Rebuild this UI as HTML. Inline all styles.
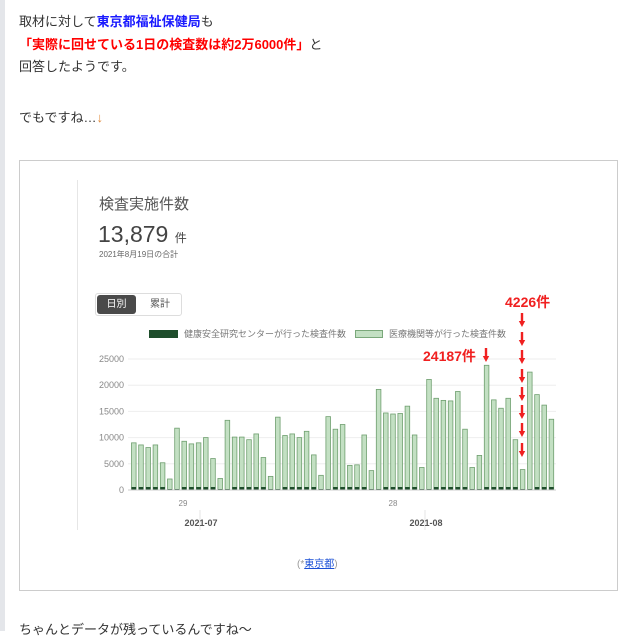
<!DOCTYPE html>
<html><head><meta charset="utf-8"><style>
body{margin:0;width:627px;height:631px;overflow:hidden;background:#fff;font-family:"Liberation Sans","Noto Sans CJK JP",sans-serif;position:relative;color:#333}
.strip{position:absolute;left:0;top:0;width:5px;height:631px;background:#e4e6ea}
.t{position:absolute;left:19px;font-size:13px;white-space:nowrap;line-height:16px}
.box{position:absolute;left:19px;top:160px;width:597px;height:429px;border:1px solid #ccc}
.a{position:absolute;white-space:nowrap}
</style></head><body>
<div class="strip"></div>
<div class="t" style="top:14px">取材に対して<b style="color:#1a1aff">東京都福祉保健局</b>も</div>
<div class="t" style="top:37px;color:#f00;font-weight:bold">「実際に回せている1日の検査数は約2万6000件」<span style="color:#333;font-weight:normal">と</span></div>
<div class="t" style="top:59px">回答したようです。</div>
<div class="t" style="top:110px">でもですね…<span style="color:#e08a3c">↓</span></div>
<div class="box"></div>
<div class="a" style="left:77px;top:180px;width:1px;height:350px;background:#e6e6e6"></div>
<div class="a" style="left:99px;top:193px;font-size:15px;color:#555">検査実施件数</div>
<div class="a" style="left:98px;top:221px;font-size:23px;color:#444">13,879 <span style="font-size:12px">件</span></div>
<div class="a" style="left:99px;top:249px;font-size:8px;color:#666">2021年8月19日の合計</div>
<div class="a" style="left:95px;top:293px;width:85px;height:21px;border:1px solid #ddd;border-radius:3px"></div>
<div class="a" style="left:97px;top:295px;width:39px;height:19px;background:#4a4a4a;border-radius:3px;color:#fff;font-size:10px;text-align:center;line-height:19px">日別</div>
<div class="a" style="left:150px;top:295px;font-size:10px;line-height:19px;color:#555">累計</div>
<div class="a" style="left:149px;top:330px;width:29px;height:8px;background:#1e4d2b"></div>
<div class="a" style="left:184px;top:327px;font-size:9px;color:#777">健康安全研究センターが行った検査件数</div>
<div class="a" style="left:355px;top:330px;width:28px;height:8px;background:#c3e0c3;border:1px solid #7aa87a;box-sizing:border-box"></div>
<div class="a" style="left:389px;top:327px;font-size:9px;color:#777">医療機関等が行った検査件数</div>
<svg class="a" style="left:0;top:0" width="627" height="631" id="s"></svg>
<div class="a" style="left:505px;top:292px;font-size:14px;font-weight:bold;color:#f02020">4226件</div>
<div class="a" style="left:423px;top:346px;font-size:14px;font-weight:bold;color:#f02020">24187件</div>
<div class="a" style="left:297px;top:555px;font-size:10px;color:#999">(*<span style="color:#1a4fd6;text-decoration:underline">東京都</span>)</div>
<div class="t" style="top:622px">ちゃんとデータが残っているんですね～</div>
<script>
var v=[9000,8600,8100,8600,5200,2100,11800,9300,8800,9000,10000,6000,2200,13300,10100,10100,9600,10700,6200,2600,13900,10400,10700,10000,11200,6700,2800,14000,11600,12500,4700,4800,10500,3700,19200,14700,14500,14600,16000,10500,4300,21100,17500,17100,17000,18800,11600,4300,6600,23800,17200,15600,17500,9600,3900,22500,18200,16200,13500];
var s='',b=490,k=131/25000;
[0,5000,10000,15000,20000,25000].forEach(function(g){var y=b-g*k;s+='<line x1="128" x2="556" y1="'+y+'" y2="'+y+'" stroke="#eee"/><text x="124" y="'+(y+3)+'" font-size="9" fill="#888" text-anchor="end" font-family="Liberation Sans">'+g+'</text>';});
v.forEach(function(x,i){var X=131.5+i*7.2,h=x*k,d=(i%7==5||i%7==6)?1:3;s+='<rect x="'+X+'" y="'+(b-h)+'" width="4.6" height="'+h+'" fill="#c3e0c3" stroke="#6f9f6f" stroke-width="0.8"/><rect x="'+X+'" y="'+(b-d)+'" width="4.6" height="'+d+'" fill="#1e4d2b"/>';});
s+='<line x1="128" x2="556" y1="'+b+'" y2="'+b+'" stroke="#ccc"/>';
s+='<line x1="200" x2="200" y1="510" y2="530" stroke="#e6e6e6"/><line x1="425" x2="425" y1="510" y2="530" stroke="#e6e6e6"/>';
s+='<text x="183" y="506" font-size="8" fill="#888" text-anchor="middle" font-family="Liberation Sans">29</text><text x="393" y="506" font-size="8" fill="#888" text-anchor="middle" font-family="Liberation Sans">28</text>';
s+='<text x="201" y="526" font-size="9" font-weight="bold" fill="#555" text-anchor="middle" font-family="Liberation Sans">2021-07</text><text x="426" y="526" font-size="9" font-weight="bold" fill="#555" text-anchor="middle" font-family="Liberation Sans">2021-08</text>';
function arr(x,y){return '<rect x="'+(x-1.2)+'" y="'+y+'" width="2.4" height="10" fill="#f02020"/><path d="M'+(x-3.2)+' '+(y+8)+'L'+(x+3.2)+' '+(y+8)+'L'+x+' '+(y+14)+'Z" fill="#f02020"/>';}
[313,332,350,369,387,405,423,443].forEach(function(y){s+=arr(522,y);});
s+=arr(486,348);
document.getElementById('s').innerHTML=s;
</script>
</body></html>
